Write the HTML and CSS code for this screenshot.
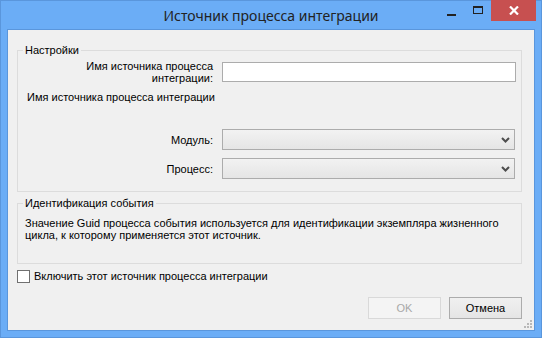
FILE: index.html
```html
<!DOCTYPE html>
<html lang="ru">
<head>
<meta charset="utf-8">
<title>Источник процесса интеграции</title>
<link rel="stylesheet" href="styles.css">
</head>
<body>
<div class="window">
  <div class="titlebar">
    <div class="title">Источник процесса интеграции</div>
    <div class="caption-buttons">
      <span class="cb cb-min"><span class="min-bar"></span></span>
      <span class="cb cb-max"><span class="max-box"></span></span>
      <span class="cb cb-close">
        <svg width="10" height="9" viewBox="0 0 10 9"><path d="M1 0.5 L9 8.5 M9 0.5 L1 8.5" stroke="#fff" stroke-width="2.2" fill="none"/></svg>
      </span>
    </div>
  </div>
  <div class="client">
    <fieldset class="group group-settings">
      <legend class="group-title">Настройки</legend>
      <div class="form-grid">
        <label class="field-label">Имя источника процесса интеграции:</label>
        <input class="textbox" type="text">
      </div>
      <div class="hint">Имя источника процесса интеграции</div>
      <div class="form-grid row-module">
        <label class="field-label">Модуль:</label>
        <div class="combo"><svg class="chev" width="9" height="6" viewBox="0 0 9 6"><path d="M1 1 L4.5 4.5 L8 1" stroke="#4d4d4d" stroke-width="2" fill="none"/></svg></div>
      </div>
      <div class="form-grid row-process">
        <label class="field-label">Процесс:</label>
        <div class="combo"><svg class="chev" width="9" height="6" viewBox="0 0 9 6"><path d="M1 1 L4.5 4.5 L8 1" stroke="#4d4d4d" stroke-width="2" fill="none"/></svg></div>
      </div>
    </fieldset>
    <fieldset class="group group-event">
      <legend class="group-title">Идентификация события</legend>
      <p class="event-text">Значение Guid процесса события используется для идентификации экземпляра жизненного цикла, к которому применяется этот источник.</p>
    </fieldset>
    <label class="check"><span class="check-box"></span><span>Включить этот источник процесса интеграции</span></label>
    <div class="buttons">
      <button class="btn btn-disabled" disabled>OK</button>
      <button class="btn">Отмена</button>
    </div>
    <div class="grip">
      <span class="dot d1"></span><span class="dot d2"></span><span class="dot d3"></span>
      <span class="dot d4"></span><span class="dot d5"></span><span class="dot d6"></span>
    </div>
  </div>
</div>
</body>
</html>
```
FILE: styles.css
```css
* { box-sizing: border-box; }
html, body { margin: 0; padding: 0; }
body {
  width: 542px;
  height: 338px;
  overflow: hidden;
  font-family: "Liberation Sans", Arial, sans-serif;
  font-size: 11px;
  color: #000;
}
.window {
  width: 542px;
  height: 338px;
  background: #6badf6;
  border: 1px solid #5a96dc;
  display: flex;
  flex-direction: column;
}
.titlebar {
  height: 28px;
  display: grid;
  grid-template-columns: 1fr;
}
.title {
  grid-area: 1 / 1;
  text-align: center;
  font-family: "Noto Sans", sans-serif;
  font-size: 14px;
  line-height: 28px;
  padding-top: 1px;
  color: #222;
}
.caption-buttons {
  grid-area: 1 / 1;
  justify-self: end;
  align-self: start;
  display: flex;
  margin-top: -1px;
  margin-right: 5px;
}
.cb {
  display: flex;
  align-items: center;
  justify-content: center;
  height: 21px;
}
.cb-min { width: 26px; }
.cb-max { width: 26px; }
.min-bar { width: 9px; height: 2px; background: #222; margin-top: 8px; margin-right: 2px; }
.max-box { width: 10px; height: 8px; border: 1px solid #222; border-top-width: 2px; margin-top: -1px; }
.cb-close { width: 45px; background: #c75050; }
.client {
  position: relative;
  flex: 1;
  margin: 0 6px 6px 6px;
  border: 1px solid #5a96dc;
  background: #f0f0f0;
  padding: 14px 12px 0 9px;
  display: flex;
  flex-direction: column;
}
.group {
  margin: 0;
  border: 1px solid #dcdcdc;
  min-width: 0;
}
.group-title {
  padding: 0 2px;
  line-height: 12px;
}
.group-settings {
  padding: 4px 5px 12px 9px;
}
.group-settings .group-title { margin-left: -4px; }
.form-grid {
  display: grid;
  grid-template-columns: 186px 294px;
  column-gap: 9px;
  align-items: center;
}
.field-label {
  text-align: right;
  line-height: 12px;
  padding-left: 50px;
}
.textbox {
  height: 20px;
  border: 1px solid #acacac;
  background: #fff;
  margin: 0;
  padding: 0 3px;
  font: inherit;
  outline: none;
}
.hint {
  margin-top: 7px;
  line-height: 12px;
}
.row-module { margin-top: 26px; }
.row-process { margin-top: 8px; }
.combo {
  width: 293px;
  height: 21px;
  border: 1px solid #acacac;
  background: linear-gradient(#f2f2f2, #e5e5e5);
  display: flex;
  align-items: center;
  justify-content: flex-end;
  padding-right: 4px;
}
.group-event {
  margin-top: 5px;
  padding: 8px 5px 22px 7px;
}
.group-event .group-title { margin-left: -2px; }
.event-text {
  margin: 0;
  line-height: 12px;
}
.check {
  margin-top: 6px;
  display: flex;
  align-items: center;
  gap: 4px;
  line-height: 13px;
}
.check-box {
  width: 13px;
  height: 13px;
  border: 1px solid #707070;
  background: #fff;
}
.buttons {
  margin-top: 14px;
  display: flex;
  justify-content: flex-end;
  gap: 8px;
}
.btn {
  width: 73px;
  height: 22px;
  margin: 0;
  border: 1px solid #acacac;
  background: linear-gradient(#f0f0f0, #e5e5e5);
  font: inherit;
  color: #000;
  padding: 0;
}
.btn-disabled {
  border-color: #d9d9d9;
  background: #f4f4f4;
  color: #a8a8a8;
}
.grip {
  position: absolute;
  right: 2px;
  bottom: 2px;
  width: 8px;
  height: 8px;
}
.dot {
  position: absolute;
  width: 2px;
  height: 2px;
  background: #b8b8b8;
}
.d1 { right: 0; bottom: 0; }
.d2 { right: 3px; bottom: 0; }
.d3 { right: 6px; bottom: 0; }
.d4 { right: 0; bottom: 3px; }
.d5 { right: 3px; bottom: 3px; }
.d6 { right: 0; bottom: 6px; }
```
